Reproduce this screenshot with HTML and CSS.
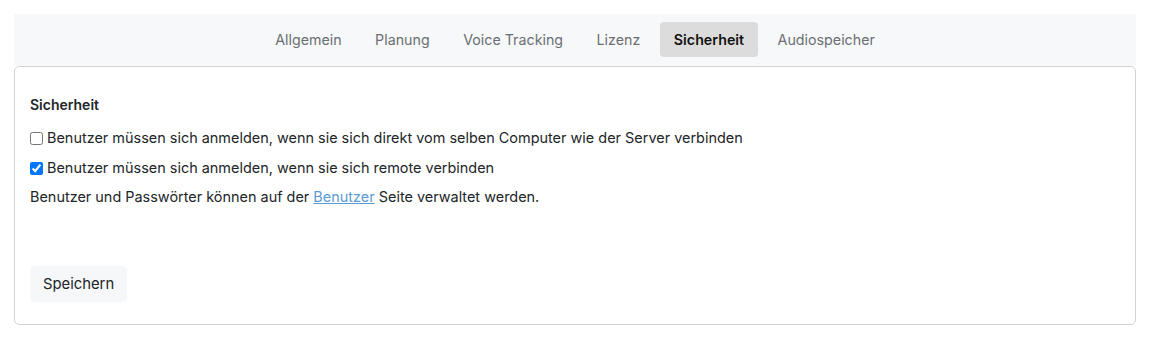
FILE: index.html
```html
<!DOCTYPE html>
<html lang="de">
<head>
<meta charset="utf-8">
<title>Einstellungen</title>
<link rel="stylesheet" href="styles.css">
</head>
<body>
<div class="page">
  <nav class="tabs">
    <a class="tab">Allgemein</a>
    <a class="tab">Planung</a>
    <a class="tab">Voice Tracking</a>
    <a class="tab">Lizenz</a>
    <a class="tab active">Sicherheit</a>
    <a class="tab">Audiospeicher</a>
  </nav>
  <section class="card">
    <h2 class="title">Sicherheit</h2>
    <label class="row"><input type="checkbox"><span>Benutzer müssen sich anmelden, wenn sie sich direkt vom selben Computer wie der Server verbinden</span></label>
    <label class="row"><input type="checkbox" checked><span>Benutzer müssen sich anmelden, wenn sie sich remote verbinden</span></label>
    <p class="row">Benutzer und Passwörter können auf der <a class="link" href="#">Benutzer</a> Seite verwaltet werden.</p>
    <button class="btn">Speichern</button>
  </section>
</div>
</body>
</html>
```
FILE: styles.css
```css
html, body { margin: 0; padding: 0; background: #fff; }
body {
  font-family: Inter, "Noto Sans", sans-serif;
  font-size: 14.45px;
  color: #212529;
}
.page { padding: 14px; }
.tabs {
  display: flex;
  justify-content: center;
  gap: 5.5px;
  background: #f7f8f9;
  padding: 8px 0 9px;
}
.tab {
  padding: 0 14px;
  height: 35px;
  line-height: 35px;
  font-size: 14.25px;
  color: #6b6f73;
  border-radius: 4px;
  cursor: pointer;
}
.tab.active {
  background: #dcdcdc;
  color: #111;
  font-weight: 600;
}
.card {
  border: 1px solid #d3d3d3;
  border-radius: 5px;
  padding: 28px 15px 22px;
  display: flex;
  flex-direction: column;
  align-items: flex-start;
}
.title {
  margin: 0 0 13px;
  font-size: 14px;
  font-weight: 600;
  line-height: 20px;
}
.row {
  display: flex;
  align-items: center;
  gap: 4px;
  margin: 0 0 10px;
  line-height: 20px;
  white-space: pre;
}
.row input {
  margin: 0;
  width: 13px;
  height: 13px;
}
p.row { display: block; margin: -1px 0 9px; }
.link { color: #5b9bd5; text-decoration: underline; }
.btn {
  margin-top: 50px;
  font: inherit;
  font-size: 14.8px;
  color: #212529;
  background: #f6f7f8;
  border: none;
  border-radius: 5px;
  padding: 0 13px;
  height: 36px;
}
```
